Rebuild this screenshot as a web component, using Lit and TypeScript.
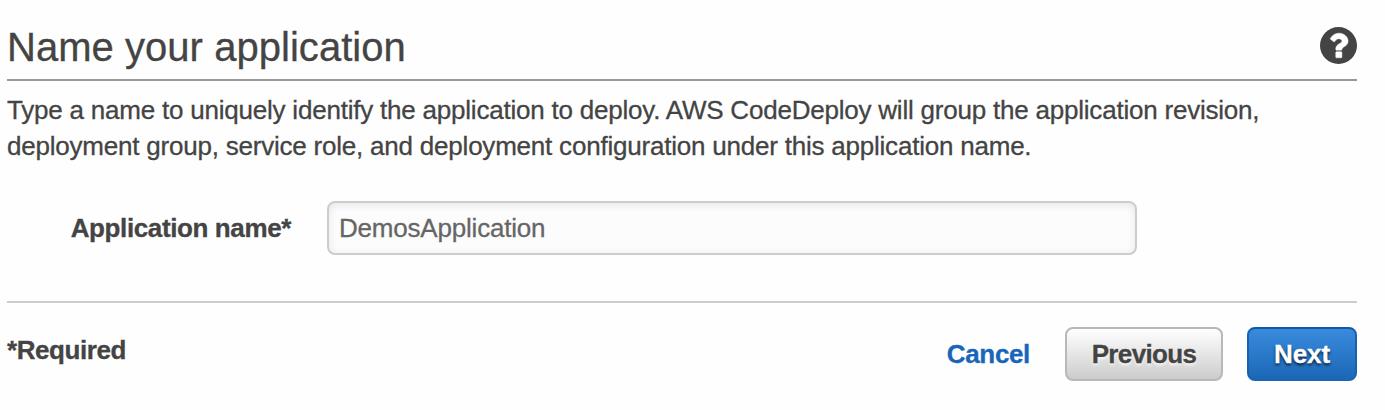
import { LitElement, html, css } from "lit";
import { customElement, state } from "lit/decorators.js";

@customElement("help-icon")
class HelpIcon extends LitElement {
  static styles = css`
    :host { display: block; width: 37px; height: 37px; color: #444; }
    svg { display: block; width: 100%; height: 100%; }
  `;
  render() {
    return html`<svg viewBox="128 128 1536 1536" role="img" aria-label="Help">
      <circle cx="896" cy="896" r="768" fill="currentColor"/>
      <path transform="translate(14 0)" fill="#fff" stroke="#fff" stroke-width="18" d="M1024 1376v-192q0-14-9-23t-23-9h-192q-14 0-23 9t-9 23v192q0 14 9 23t23 9h192q14 0 23-9t9-23zM1280 704q0-88-55.500-163t-138.500-116-170-41q-243 0-371 213-15 24 8 42l132 100q7 6 19 6 16 0 25-12 53-68 86-92 34-24 86-24 48 0 85.500 26t37.500 59q0 38-20 61t-68 45q-63 28-115.500 86.500t-52.500 125.500v36q0 14 9 23t23 9h192q14 0 23-9t9-23q0-19 21.500-49.500t54.500-49.500q32-18 49-28.500t46-35 44.500-48 28-60.500 12.500-81z"/>
    </svg>`;
  }
}

@customElement("app-root")
class AppRoot extends LitElement {
  static styles = css`
    :host {
      display: block;
      box-sizing: border-box;
      height: 410px;
      padding: 0 28px 0 7px;
      background: #fefefe;
      color: #444;
      font: 26px/36px "Liberation Sans", Arial, sans-serif;
      -webkit-text-stroke: 0.3px currentColor;
    }
    .header {
      display: flex;
      justify-content: space-between;
      box-sizing: border-box;
      height: 81px;
      padding-top: 27px;
      border-bottom: 2px solid #999;
    }
    h1 { margin: 0; font-size: 40px; line-height: 41px; font-weight: 400; letter-spacing: 0.04px; white-space: nowrap; }
    .intro { margin: 0; padding-top: 11px; white-space: nowrap; letter-spacing: -0.215px; }
    .line { display: block; width: max-content; }
    .field { display: flex; align-items: center; padding-top: 37px; }
    label { width: 284px; margin-right: 36px; text-align: right; font-weight: 700; letter-spacing: -0.38px; }
    input {
      box-sizing: border-box;
      width: 810px;
      height: 54px;
      margin: 0;
      padding: 0 10px;
      border: 2px solid #ccc;
      border-radius: 8px;
      background: #fcfcfc;
      box-shadow: inset 0 2px 8px rgba(0, 0, 0, 0.09);
      color: #666;
      font: inherit;
      letter-spacing: -0.2px;
      outline: none;
    }
    .footer {
      display: flex;
      align-items: flex-start;
      margin-top: 46px;
      padding-top: 24px;
      border-top: 2px solid #ccc;
    }
    .required { margin-top: 5px; font-weight: 700; letter-spacing: -0.42px; }
    .actions { display: flex; align-items: center; margin-left: auto; font-weight: 700; }
    .cancel { margin-right: 35px; color: #1766ba; text-decoration: none; letter-spacing: -0.35px; }
    button {
      box-sizing: border-box;
      height: 54px;
      margin: 0;
      padding: 0;
      border-radius: 8px;
      font: inherit;
    }
    .previous {
      width: 158px;
      margin-right: 24px;
      border: 2px solid #b8b8b8;
      background: linear-gradient(#fff, #ccc);
      color: #444;
      letter-spacing: -0.65px;
      text-shadow: 0 2px 3px rgba(255, 255, 255, 0.8);
    }
    .next {
      width: 110px;
      border: 2px solid #1862b0;
      border-color: #0f59a9 #1761af #1b65b3;
      background: linear-gradient(#3a8bde, #1b67b6);
      color: #fff;
      letter-spacing: -0.1px;
      text-shadow: 0 2px 3px rgba(0, 0, 0, 0.8);
    }
  `;

  @state() private name = "DemosApplication";

  render() {
    return html`
      <header class="header"><h1>Name your application</h1><help-icon></help-icon></header>
      <p class="intro">
        <span class="line">Type a name to uniquely identify the application to deploy. AWS CodeDeploy will group the application revision,</span>
        <span class="line">deployment group, service role, and deployment configuration under this application name.</span>
      </p>
      <div class="field">
        <label for="name">Application name*</label>
        <input id="name" type="text" spellcheck="false" .value=${this.name}
          @input=${(e: Event) => (this.name = (e.target as HTMLInputElement).value)} />
      </div>
      <footer class="footer">
        <span class="required">*Required</span>
        <div class="actions">
          <a class="cancel" href="#">Cancel</a>
          <button class="previous">Previous</button>
          <button class="next">Next</button>
        </div>
      </footer>
    `;
  }
}
